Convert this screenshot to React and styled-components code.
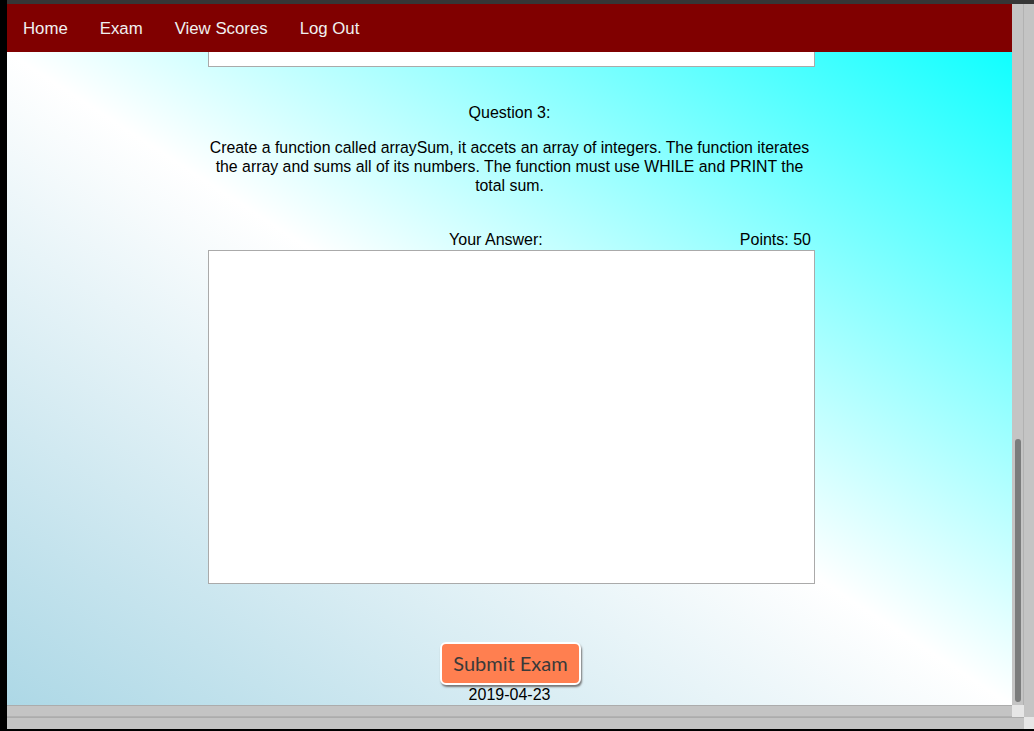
import React from 'react'
import styled, { createGlobalStyle } from 'styled-components'

const GlobalStyle = createGlobalStyle`
html, body {
    margin: 0;
    padding: 0;
    overflow: hidden;
    background: #000;
}
* { box-sizing: border-box; }
`

const Frame = styled.div`
width: 1034px;
height: 731px;
background: #000;
display: flex;
flex-direction: column;
font-family: "Liberation Sans", Arial, sans-serif;
`
const TopStrip = styled.div`
height: 4px;
margin-left: 7px;
background: #363636;
`
const Main = styled.div`
display: flex;
height: 725px;
padding-left: 7px;
`
const Window = styled.div`
width: 1017px;
display: flex;
flex-direction: column;
`
const Upper = styled.div`
display: flex;
height: 701px;
`
const Viewport = styled.div`
width: 1005px;
display: flex;
flex-direction: column;
`
const VScroll = styled.div`
width: 12px;
background: #c4c4c4;
border-right: 1px solid #b2b2b2;
display: flex;
flex-direction: column;
justify-content: flex-end;
padding: 0 0 3px 3px;
`
const Thumb = styled.div`
width: 6px;
height: 263px;
border-radius: 3px;
background: #7b7c7c;
`
const HRow = styled.div`
display: flex;
height: 12px;
`
const HTrack = styled.div`
flex: 1;
background: #c4c4c4;
border-top: 1px solid #acacac;
border-bottom: ${p => (p.$last ? 'none' : '1px solid #b2b2b2')};
`
const Corner = styled.div`
width: ${p => p.$w}px;
background: #e6e6e6;
`
const OuterV = styled.div`
width: 10px;
display: flex;
flex-direction: column;
`
const OuterTrack = styled.div`
flex: 1;
background: #c4c4c4;
`
const OuterCorner = styled.div`
height: 12px;
background: #e6e6e6;
`

const Nav = styled.nav`
height: 48px;
padding-top: 2px;
background: #800000;
display: flex;
align-items: center;
`
const NavLink = styled.a`
padding: 0 16px;
color: #f0f0f0;
font-size: 16.8px;
text-decoration: none;
`

const Content = styled.main`
flex: 1;
overflow: hidden;
background: linear-gradient(to top right, lightblue, white, #10ffff);
display: flex;
flex-direction: column;
align-items: center;
color: #000;
font-size: 16px;
`
const Card = styled.div`
width: 607px;
display: flex;
flex-direction: column;
align-items: flex-start;
text-align: center;
`
const PrevBox = styled.div`
width: 607px;
margin-left: 2px;
height: 15px;
background: #fff;
border: 1px solid #aaa;
border-top: none;
`
const Title = styled.p`
width: 100%;
margin: 37px 0 0;
`
const Question = styled.p`
width: 100%;
margin: 16px 0 0;
font-size: 15.85px;
line-height: 19px;
`
const AnswerHead = styled.div`
width: 100%;
margin-top: 36px;
display: flex;
padding-right: 2px;
`
const AnswerLabel = styled.span`
flex: 1;
padding-left: 46px;
`
const Answer = styled.textarea`
width: 607px;
margin: 1px 0 0 2px;
height: 334px;
border: 1px solid #aaa;
background: #fff;
resize: none;
`
const SubmitButton = styled.button`
margin-top: 58px;
margin-left: 2px;
width: 141px;
height: 43px;
background: #ff7f50;
color: #3a3a3a;
font-family: Lato, "Noto Sans", sans-serif;
font-size: 20px;
line-height: 1;
padding-bottom: 2px;
border: 2px solid #fff;
border-radius: 6px;
box-shadow: 1px 2px 2px #777;
`
const DateLine = styled.div`
margin-top: 1px;
`

function App() {
    return (
        <Frame>
            <GlobalStyle />
            <TopStrip />
            <Main>
                <Window>
                    <Upper>
                        <Viewport>
                            <Nav>
                                <NavLink>Home</NavLink>
                                <NavLink>Exam</NavLink>
                                <NavLink>View Scores</NavLink>
                                <NavLink>Log Out</NavLink>
                            </Nav>
                            <Content>
                                <Card>
                                    <PrevBox />
                                    <Title>Question 3:</Title>
                                    <Question>
                                        Create a function called arraySum, it accets an array of integers. The function iterates the array and sums all of its numbers. The function must use WHILE and PRINT the total sum.
                                    </Question>
                                    <AnswerHead>
                                        <AnswerLabel>Your Answer:</AnswerLabel>
                                        <span>Points: 50</span>
                                    </AnswerHead>
                                    <Answer />
                                </Card>
                                <SubmitButton>Submit Exam</SubmitButton>
                                <DateLine>2019-04-23</DateLine>
                            </Content>
                        </Viewport>
                        <VScroll>
                            <Thumb />
                        </VScroll>
                    </Upper>
                    <HRow>
                        <HTrack />
                        <Corner $w={12} />
                    </HRow>
                    <HRow>
                        <HTrack $last />
                    </HRow>
                </Window>
                <OuterV>
                    <OuterTrack />
                    <OuterCorner />
                </OuterV>
            </Main>
        </Frame>
    )
}

export default App
